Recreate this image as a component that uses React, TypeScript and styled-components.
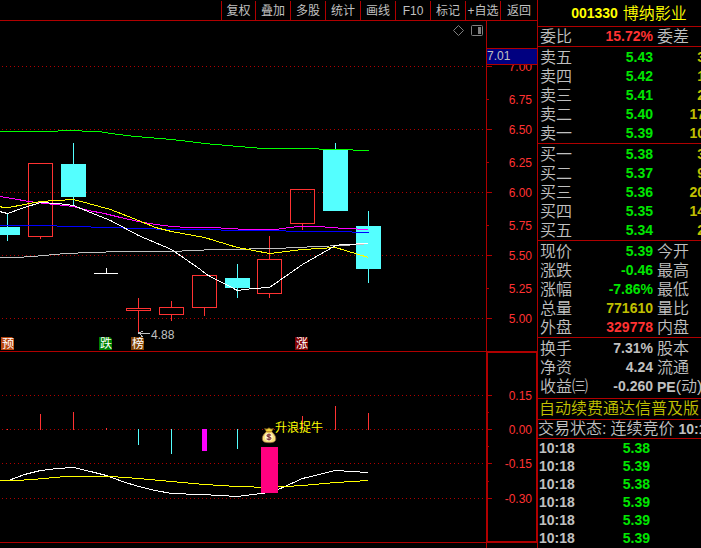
import React from "react";
import styled, { createGlobalStyle } from "styled-components";

const RED = "#b00000";
const UP = "#ff3232";
const DOWN = "#54ffff";
const SILVER = "#c0c0c0";
const CJK = `"Liberation Sans", "Noto Sans CJK SC", sans-serif`;

const tones = {
  green: "#00e600",
  red: "#ff3232",
  olive: "#c0c000",
  silver: SILVER,
};
type Tone = keyof typeof tones;

const GlobalStyle = createGlobalStyle`
  * { box-sizing: border-box; }
  body {
    margin: 0;
    background: #000;
    color: ${SILVER};
    font-family: ${CJK};
    overflow: hidden;
  }
`;

const Page = styled.div`
  display: grid;
  grid-template-columns: minmax(0, 1fr) 164px;
  min-height: 100vh;
`;

const ChartColumn = styled.main`
  display: flex;
  flex-direction: column;
  min-width: 0;
`;

const Toolbar = styled.nav`
  display: flex;
  justify-content: flex-end;
  height: 21px;
  padding-top: 1px;
  border-bottom: 1px solid ${RED};
`;

const ToolButton = styled.button`
  flex: none;
  width: 35px;
  padding: 0;
  border: 0;
  border-left: 1px solid ${RED};
  background: none;
  color: ${SILVER};
  font: 400 12px/18px ${CJK};
  white-space: nowrap;
  &:first-child {
    width: 34px;
  }
  &:last-child {
    width: 37px;
  }
`;

const ChartBody = styled.div`
  display: grid;
  grid-template-columns: minmax(0, 1fr) 51px;
  flex: 1;
`;

const Stack = styled.div`
  display: flex;
  flex-direction: column;
  min-width: 0;
`;

const Pane = styled.section`
  position: relative;
  border-bottom: 1px solid ${RED};
`;

const Drawing = styled.svg`
  display: block;
  width: 100%;
  overflow: hidden;
  font: 400 12px ${CJK};
`;

const PaneTools = styled.div`
  position: absolute;
  top: 3px;
  right: 2px;
  display: flex;
  gap: 6px;
`;

const PaneTool = styled.button`
  display: block;
  padding: 0;
  border: 0;
  background: none;
  svg {
    display: block;
  }
`;

const MainAxis = styled.div`
  position: relative;
  border-left: 1px solid ${RED};
`;

const SubAxis = styled.div`
  border: 2px solid ${RED};
  border-right-width: 1px;
`;

const AxisTail = styled.div`
  flex: 1;
  border-left: 1px solid ${RED};
`;

const PriceMarker = styled.output`
  position: absolute;
  top: 27px;
  left: 0;
  right: 0;
  border: 1px solid ${RED};
  border-width: 1px 0;
  background: #000080;
  font-size: 12px;
  line-height: 15px;
`;

const QuotePanel = styled.aside`
  overflow: hidden;
  border-left: 1px solid ${RED};
`;

const Title = styled.h1`
  display: flex;
  justify-content: center;
  align-items: center;
  gap: 5px;
  width: 182px;
  height: 27px;
  margin: 0;
  border-bottom: 1px solid ${RED};
  color: #ffff00;
  font-size: 14px;
  font-weight: 700;
`;

const StockName = styled.span`
  padding-bottom: 2px;
  font-size: 16px;
  font-weight: 350;
`;

const Section = styled.section<{ $start?: number; $end?: number }>`
  padding-top: ${(p) => p.$start ?? 0}px;
  padding-bottom: ${(p) => p.$end ?? 0}px;
  border-bottom: 1px solid ${RED};
`;

const Table = styled.table`
  width: 167px;
  table-layout: fixed;
  border-collapse: collapse;
`;

const Row = styled.tr<{ $height?: number }>`
  height: ${(p) => p.$height ?? 19}px;
  line-height: ${(p) => p.$height ?? 19}px;
`;

const Label = styled.th<{ $second?: boolean }>`
  padding: 0 0 0 ${(p) => (p.$second ? 4 : 2)}px;
  text-align: left;
  font-size: 16px;
  font-weight: 350;
  line-height: 18px;
  white-space: nowrap;
`;

const Value = styled.td<{ $tone: Tone }>`
  padding: 0;
  text-align: right;
  color: ${(p) => tones[p.$tone]};
  font-size: 14px;
  font-weight: 700;
  white-space: nowrap;
`;

const TradeTime = styled.td`
  padding: 0 0 0 1px;
  font-size: 14px;
  font-weight: 700;
`;

const TradePrice = styled(Value)`
  padding-right: 3px;
`;

const Strong = styled.span`
  font-size: 14px;
  font-weight: 700;
`;

const Notice = styled.a`
  display: block;
  padding-left: 1px;
  border-bottom: 1px solid ${RED};
  color: #c0c000;
  font-size: 16px;
  font-weight: 350;
  line-height: 20px;
  text-decoration: none;
  white-space: nowrap;
`;

const Status = styled.p`
  display: flex;
  gap: 4px;
  margin: 0;
  border-bottom: 1px solid ${RED};
  font-size: 16px;
  font-weight: 350;
  line-height: 18px;
  white-space: nowrap;
`;

const tools = ["复权", "叠加", "多股", "统计", "画线", "F10", "标记", "+自选", "返回"];

type Candle = { x: number; kind: "up" | "down"; top: number; bottom: number; high: number; low: number };

const candles: Candle[] = [
  { x: 7, kind: "down", top: 227, bottom: 235, high: 214, low: 241 },
  { x: 40, kind: "up", top: 163, bottom: 237, high: 163, low: 239 },
  { x: 73, kind: "down", top: 164, bottom: 197, high: 143, low: 205 },
  { x: 138, kind: "up", top: 308, bottom: 311, high: 298, low: 332 },
  { x: 171, kind: "up", top: 307, bottom: 315, high: 301, low: 321 },
  { x: 204, kind: "up", top: 275, bottom: 308, high: 275, low: 316 },
  { x: 237, kind: "down", top: 278, bottom: 288, high: 264, low: 298 },
  { x: 269, kind: "up", top: 259, bottom: 294, high: 236, low: 298 },
  { x: 302, kind: "up", top: 189, bottom: 224, high: 189, low: 230 },
  { x: 335, kind: "down", top: 149, bottom: 211, high: 143, low: 211 },
  { x: 368, kind: "down", top: 226, bottom: 269, high: 211, low: 283 },
];

const averages = [
  { color: "#0000ff", points: "-1,225 56,225 57,226 90,226 91,227 122,227 123,228 155,228 156,229 220,229 221,230 285,230 286,231 351,231 352,232 368,232" },
  { color: SILVER, points: "-1,257 16,257 32,256 65,253 90,252 122,251 175,251 188,250 220,249 278,248 294,247 319,246 360,244 368,243" },
  { color: "#00ff00", points: "-1,131 57,131 58,130 81,130 82,131 98,131 110,133 135,136 160,138 180,140 204,143 238,146 262,148 318,148 319,149 352,149 353,150 368,150" },
  { color: "#ff00ff", points: "-1,196 12,198 28,201 45,203 73,206 88,210 104,213 120,217 138,221 155,224 171,226 187,227 220,227 221,228 254,229 275,229 297,226 318,226 344,228 368,229" },
  { color: "#ffff00", points: "-1,206 3,207 8,207 24,204 40,201 56,200 73,199 88,203 110,209 138,220 155,227 171,231 204,237 237,247 269,253 302,249 319,248 335,247 368,257" },
  { color: "#ffffff", points: "-1,211 7,213 24,207 40,202 57,203 73,205 90,212 110,220 138,235 171,249 200,269 206,274 237,290 252,288 269,287 302,264 335,245 343,244 368,243" },
];

const tags = [
  { x: 1, text: "预", fill: "#b8460e" },
  { x: 99, text: "跌", fill: "#008000" },
  { x: 131, text: "榜", fill: "#804000" },
  { x: 295, text: "涨", fill: "#800000" },
];

const bars = [
  { x: 7, w: 1, top: 429, bottom: 430, fill: UP },
  { x: 40, w: 1, top: 414, bottom: 430, fill: UP },
  { x: 73, w: 1, top: 412, bottom: 430, fill: UP },
  { x: 106, w: 1, top: 428, bottom: 430, fill: UP },
  { x: 138, w: 1, top: 429, bottom: 445, fill: DOWN },
  { x: 171, w: 1, top: 429, bottom: 454, fill: DOWN },
  { x: 202, w: 5, top: 429, bottom: 451, fill: "#ff00ff" },
  { x: 237, w: 1, top: 429, bottom: 449, fill: DOWN },
  { x: 302, w: 1, top: 416, bottom: 430, fill: UP },
  { x: 335, w: 1, top: 406, bottom: 430, fill: UP },
  { x: 368, w: 1, top: 413, bottom: 430, fill: UP },
];

const signals = [
  { color: "#ffffff", points: "-1,480 8,480 24,474 40,470 57,468 73,467 90,471 106,475 122,481 138,486 155,490 171,493 200,494 220,495 237,496 252,494 269,492 280,488 302,478 335,470 368,472" },
  { color: "#ffff00", points: "-1,480 16,480 32,479 65,476 110,476 138,478 171,481 204,484 237,486 269,487 285,486 302,485 335,482 368,480" },
];

const mainTicks = [
  { y: 66, text: "7.00" },
  { y: 99, text: "6.75" },
  { y: 129, text: "6.50" },
  { y: 162, text: "6.25" },
  { y: 192, text: "6.00" },
  { y: 225, text: "5.75" },
  { y: 255, text: "5.50" },
  { y: 288, text: "5.25" },
  { y: 318, text: "5.00" },
];

const subTicks = [
  { y: 395, text: "0.15" },
  { y: 429, text: "0.00" },
  { y: 463, text: "-0.15" },
  { y: 498, text: "-0.30" },
];

const asks: [string, string, string][] = [
  ["卖五", "5.43", "3"],
  ["卖四", "5.42", "1"],
  ["卖三", "5.41", "2"],
  ["卖二", "5.40", "17"],
  ["卖一", "5.39", "10"],
];
const bids: [string, string, string][] = [
  ["买一", "5.38", "3"],
  ["买二", "5.37", "9"],
  ["买三", "5.36", "20"],
  ["买四", "5.35", "14"],
  ["买五", "5.34", "2"],
];

type Stat = { label: string; value: string; tone: Tone; next: React.ReactNode };
const spread: Stat[] = [{ label: "委比", value: "15.72%", tone: "red", next: "委差" }];
const prices: Stat[] = [
  { label: "现价", value: "5.39", tone: "green", next: "今开" },
  { label: "涨跌", value: "-0.46", tone: "green", next: "最高" },
  { label: "涨幅", value: "-7.86%", tone: "green", next: "最低" },
  { label: "总量", value: "771610", tone: "olive", next: "量比" },
  { label: "外盘", value: "329778", tone: "red", next: "内盘" },
];
const ratios: Stat[] = [
  { label: "换手", value: "7.31%", tone: "silver", next: "股本" },
  { label: "净资", value: "4.24", tone: "silver", next: "流通" },
  { label: "收益㈢", value: "-0.260", tone: "silver", next: <><Strong>PE</Strong>(动)</> },
];
const trades = ["5.38", "5.39", "5.38", "5.39", "5.39", "5.39"];

function GridLines({ rows }: { rows: number[] }) {
  return (
    <g stroke={RED} strokeDasharray="1 3" shapeRendering="crispEdges">
      {rows.map((y) => (
        <line key={y} x1="2" x2="100%" y1={y + 0.5} y2={y + 0.5} />
      ))}
    </g>
  );
}

function Curves({ lines }: { lines: { color: string; points: string }[] }) {
  return (
    <g fill="none" shapeRendering="crispEdges" transform="translate(0.5 0.5)">
      {lines.map((l) => (
        <polyline key={l.color} points={l.points} stroke={l.color} />
      ))}
    </g>
  );
}

function CandleShape({ x, kind, top, bottom, high, low }: Candle) {
  const color = kind === "up" ? UP : DOWN;
  return (
    <g fill={color}>
      {high < top && <rect x={x} y={high} width="1" height={top - high} />}
      {low > bottom && <rect x={x} y={bottom} width="1" height={low - bottom} />}
      {kind === "down" ? (
        <rect x={x - 12} y={top} width="25" height={bottom - top} />
      ) : (
        <rect x={x - 11.5} y={top + 0.5} width="24" height={bottom - top - 1} fill="none" stroke={color} />
      )}
    </g>
  );
}

function MainChart() {
  return (
    <Drawing height="330" role="img" aria-label="K线图">
      <g transform="translate(0 -21)">
        <GridLines rows={[66, 129, 192, 255, 318]} />
        <g shapeRendering="crispEdges">
          {candles.map((c) => (
            <CandleShape key={c.x} {...c} />
          ))}
          <path d="M94 273.5H118M106.5 268V273" stroke="#fff" />
        </g>
        <Curves lines={averages} />
        {tags.map((t) => (
          <g key={t.x}>
            <path d={`M${t.x} 337h11l2 2v11h-13z`} fill={t.fill} />
            <text x={t.x + 1} y="348" fill="#fff">{t.text}</text>
          </g>
        ))}
        <g shapeRendering="crispEdges">
          <path d="M139 333.5H150M142.5 331L139.5 333.5L142.5 337" fill="none" stroke={SILVER} />
          <rect x="138" y="332" width="2" height="2" fill={SILVER} />
        </g>
        <text x="151" y="339" fill={SILVER}>4.88</text>
      </g>
    </Drawing>
  );
}

function MoneyBag() {
  return (
    <g>
      <path d="M264.500 428.500L267 429L269 427.800L271 429L273.500 428.500L271.500 432H266.500Z" fill="#f2d43a" stroke="#6b4a14" strokeWidth="0.800" />
      <path d="M266.500 431.500C264 434 262 436 262.300 439C262.600 442 265 442.700 269 442.700C273 442.700 275.600 442 275.800 439C276 436 274 434 271.500 431.500Z" fill="#f6e27a" stroke="#8a5a3c" strokeWidth="0.800" />
      <ellipse cx="268.800" cy="437" rx="4" ry="4" fill="#fff3c4" />
      <path d="M266.500 431.800H271.500" stroke="#c89a1c" strokeWidth="1.200" />
      <path d="M271 435.300C270 434.300 267 434.300 267 435.800C267 437.400 271 436.600 271 438.300C271 439.800 267.600 439.800 266.700 438.700M269 433.600V440.600" fill="none" stroke="#7a2f3c" strokeWidth="1.100" />
    </g>
  );
}

function SubChart() {
  return (
    <Drawing height="190" role="img" aria-label="指标图">
      <g transform="translate(0 -352)">
        <GridLines rows={subTicks.map((t) => t.y)} />
        <g shapeRendering="crispEdges">
          {bars.map((b) => (
            <rect key={b.x} x={b.x} y={b.top} width={b.w} height={b.bottom - b.top} fill={b.fill} />
          ))}
        </g>
        <Curves lines={signals} />
        <rect x="261" y="447" width="17" height="46" fill="#ff0080" />
        <MoneyBag />
        <text x="275" y="432" fill="#ffff00">升浪捉牛</text>
      </g>
    </Drawing>
  );
}

function Scale({ ticks, top, height, start, minor }: {
  ticks: { y: number; text: string }[];
  top: number;
  height: number;
  start: number;
  minor: number[];
}) {
  return (
    <Drawing height={height}>
      <g transform={`translate(${start} ${-top})`} fill={UP}>
        <g fill={RED} shapeRendering="crispEdges">
          {ticks.map((t) => (
            <rect key={t.y} x="0" y={t.y} width={minor.includes(t.y) ? 2 : 5} height="1" />
          ))}
          {minor.map((y) => (
            <rect key={y} x="0" y={y} width="2" height="1" />
          ))}
        </g>
        {ticks.map((t) => (
          <text key={t.y} x="45" y={t.y + 5} textAnchor="end">{t.text}</text>
        ))}
      </g>
    </Drawing>
  );
}

function Columns() {
  return (
    <colgroup>
      <col width="50" />
      <col width="65" />
      <col width="52" />
    </colgroup>
  );
}

function Orders({ rows }: { rows: [string, string, string][] }) {
  return (
    <Table>
      <Columns />
      <tbody>
        {rows.map(([label, price, amount]) => (
          <Row key={label}>
            <Label scope="row">{label}</Label>
            <Value $tone="green">{price}</Value>
            <Value $tone="olive">{amount}</Value>
          </Row>
        ))}
      </tbody>
    </Table>
  );
}

function Stats({ rows }: { rows: Stat[] }) {
  return (
    <Table>
      <Columns />
      <tbody>
        {rows.map((r) => (
          <Row key={r.label}>
            <Label scope="row">{r.label}</Label>
            <Value $tone={r.tone}>{r.value}</Value>
            <Label scope="row" $second>{r.next}</Label>
          </Row>
        ))}
      </tbody>
    </Table>
  );
}

export default function App() {
  return (
    <>
      <GlobalStyle />
      <Page>
        <ChartColumn>
          <Toolbar>
            {tools.map((t) => (
              <ToolButton key={t} type="button">{t}</ToolButton>
            ))}
          </Toolbar>
          <ChartBody>
            <Stack>
              <Pane>
                <MainChart />
                <PaneTools>
                  <PaneTool type="button" aria-label="标记点">
                    <svg width="13" height="13">
                      <path d="M6.500 1.500L11.500 6.500L6.500 11.500L1.500 6.500Z" fill="none" stroke="#808080" />
                    </svg>
                  </PaneTool>
                  <PaneTool type="button" aria-label="侧栏">
                    <svg width="13" height="13">
                      <rect x="0.500" y="1.500" width="11" height="10" rx="1" fill="none" stroke="#808080" />
                      <rect x="7" y="3" width="3" height="7" fill="#808080" />
                    </svg>
                  </PaneTool>
                </PaneTools>
              </Pane>
              <Pane>
                <SubChart />
              </Pane>
            </Stack>
            <Stack>
              <MainAxis>
                <Scale ticks={mainTicks} top={21} height={330} start={0} minor={[99, 162, 225, 288]} />
                <PriceMarker>7.01</PriceMarker>
              </MainAxis>
              <SubAxis>
                <Scale ticks={subTicks} top={353} height={188} start={-1} minor={[412, 446, 481]} />
              </SubAxis>
              <AxisTail />
            </Stack>
          </ChartBody>
        </ChartColumn>
        <QuotePanel>
          <Title>
            001330<StockName>博纳影业</StockName>
          </Title>
          <Section><Stats rows={spread} /></Section>
          <Section $start={1}><Orders rows={asks} /></Section>
          <Section $start={1}><Orders rows={bids} /></Section>
          <Section $start={1}><Stats rows={prices} /></Section>
          <Section $start={1} $end={2}><Stats rows={ratios} /></Section>
          <Notice href="#renew">自动续费通达信普及版</Notice>
          <Status>
            <span>交易状态:</span>
            <span>连续竞价</span>
            <Strong>10:1</Strong>
          </Status>
          <Table>
            <Columns />
            <tbody>
              {trades.map((price, i) => (
                <Row key={i} $height={18}>
                  <TradeTime>10:18</TradeTime>
                  <TradePrice $tone="green">{price}</TradePrice>
                </Row>
              ))}
            </tbody>
          </Table>
        </QuotePanel>
      </Page>
    </>
  );
}
